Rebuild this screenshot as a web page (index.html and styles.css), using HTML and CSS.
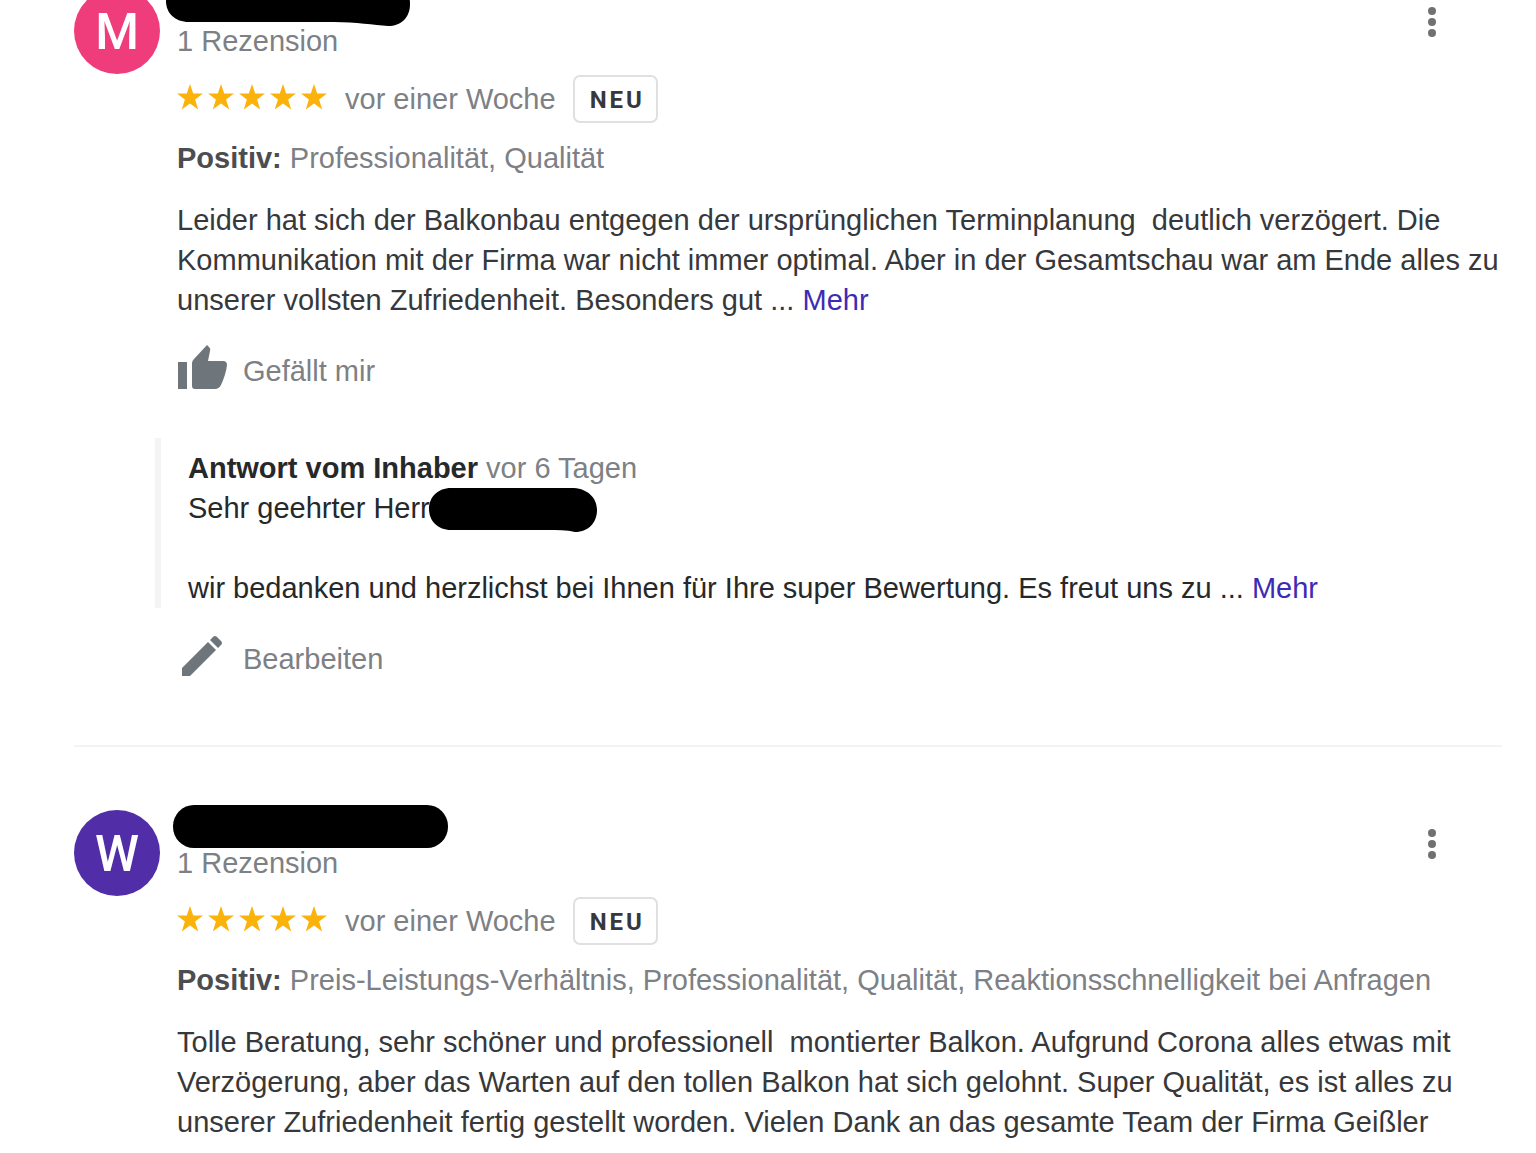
FILE: index.html
```html
<!DOCTYPE html>
<html lang="de">
<head>
  <meta charset="UTF-8">
  <meta name="viewport" content="width=device-width, initial-scale=1">
  <title>Rezensionen</title>
  <link rel="stylesheet" href="styles.css">
</head>
<body>

  <!-- shared icons -->
  <svg class="sprite" aria-hidden="true">
    <symbol id="stars" viewBox="0 0 151 31">
      <path id="star" d="M13 0l3.2 9.6H26l-7.900 5.900 3.100 10L13 19.500 4.800 25.500l3.100-10L0 9.600h9.800z"/>
      <use href="#star" x="31"/>
      <use href="#star" x="62"/>
      <use href="#star" x="93"/>
      <use href="#star" x="124"/>
    </symbol>
    <symbol id="dots" viewBox="0 0 24 32">
      <circle cx="12" cy="5" r="4"/>
      <circle cx="12" cy="16" r="4"/>
      <circle cx="12" cy="27" r="4"/>
    </symbol>
  </svg>

  <main class="reviews">
    <article class="review">
      <div class="avatar pink">M</div>
      <div class="content">
        <header class="review-header">
          <div>
            <div class="name">
              <svg class="redacted redacted-first" viewBox="0 0 244 46" aria-hidden="true">
                <path d="M21 0H223C236 0 244 9 244 24C244 38 235 46 222 46C208 45 190 42 168 42H23C9 42 0 33 0 21C0 9 9 0 21 0z"/>
              </svg>
            </div>
            <div class="muted">1 Rezension</div>
          </div>
          <button class="menu" type="button" aria-label="Menü"><svg width="24" height="32"><use href="#dots"/></svg></button>
        </header>
        <div class="rating">
          <svg class="stars" role="img" aria-label="5 von 5"><use href="#stars"/></svg>
          <span>vor einer Woche</span>
          <span class="badge">NEU</span>
        </div>
        <p class="positive"><b>Positiv:</b> Professionalität, Qualität</p>
        <p class="text">Leider hat sich der Balkonbau entgegen der ursprünglichen Terminplanung&nbsp; deutlich verzögert. Die Kommunikation mit der Firma war nicht immer optimal. Aber in der Gesamtschau war am Ende alles zu unserer vollsten Zufriedenheit. Besonders gut ... <a href="#">Mehr</a></p>
        <button class="action" type="button">
          <svg width="50" height="52" viewBox="0 0 50 52"><path d="M1 17h9v27H1zM15 41V18q0-2 2-4L30 0l2 2q2 2 1 4l-2 10h15q4 0 4 4-1 9-6 20-2 4-6 4H18q-3 0-3-3z"/></svg>
          Gefällt mir
        </button>

        <section class="reply">
          <div><b>Antwort vom Inhaber</b> <span class="muted">vor 6 Tagen</span></div>
          <div class="greeting">Sehr geehrter Herr
            <svg class="redacted redacted-reply" viewBox="0 0 168 44" aria-hidden="true">
              <path d="M22 0H145C159 1 168 10 168 22C168 34 160 44 146 44C138 42 128 42 118 42H22C9 42 0 33 0 21C0 9 9 0 22 0z"/>
            </svg>
          </div>
          <p>wir bedanken und herzlichst bei Ihnen für Ihre super Bewertung. Es freut uns zu ... <a href="#">Mehr</a></p>
        </section>
        <button class="action" type="button">
          <svg width="50" height="52" viewBox="0 0 50 52"><path d="M5 35L31 9l8 8L13 43H5zM33 7l3-3q2-2 4 0l4 4q2 2 0 4l-3 3z"/></svg>
          Bearbeiten
        </button>
      </div>
    </article>

    <article class="review">
      <div class="avatar purple">W</div>
      <div class="content">
        <header class="review-header">
          <div>
            <div class="name">
              <svg class="redacted redacted-second" viewBox="0 0 275 43" aria-hidden="true">
                <rect width="275" height="43" rx="21"/>
              </svg>
            </div>
            <div class="muted">1 Rezension</div>
          </div>
          <button class="menu" type="button" aria-label="Menü"><svg width="24" height="32"><use href="#dots"/></svg></button>
        </header>
        <div class="rating">
          <svg class="stars" role="img" aria-label="5 von 5"><use href="#stars"/></svg>
          <span>vor einer Woche</span>
          <span class="badge">NEU</span>
        </div>
        <p class="positive"><b>Positiv:</b> Preis-Leistungs-Verhältnis, Professionalität, Qualität, Reaktionsschnelligkeit bei Anfragen</p>
        <p class="text">Tolle Beratung, sehr schöner und professionell&nbsp; montierter Balkon. Aufgrund Corona alles etwas mit Verzögerung, aber das Warten auf den tollen Balkon hat sich gelohnt. Super Qualität, es ist alles zu unserer Zufriedenheit fertig gestellt worden. Vielen Dank an das gesamte Team der Firma Geißler</p>
      </div>
    </article>
  </main>

</body>
</html>
```
FILE: styles.css
```css
body {
  margin: 0;
  background: #fff;
  color: #36383b;
  font-family: "Liberation Sans", Arial, sans-serif;
  font-size: 29px;
  line-height: 40px;
}

p {
  margin: 0;
}

a {
  color: #3d2bb5;
  text-decoration: none;
}

button {
  padding: 0;
  border: 0;
  background: none;
  font: inherit;
  cursor: pointer;
}

.sprite {
  display: block;
  width: 0;
  height: 0;
}

/* the list is scrolled a little, its first name is cut off */
.reviews {
  margin: -76px 34px 0 74px;
}

.review {
  display: grid;
  grid-template-columns: 86px 1fr;
  column-gap: 17px;
  padding-top: 57px;
}

.review + .review {
  border-top: 2px solid #f3f3f3;
  padding-top: 56px;
}

.avatar {
  width: 86px;
  height: 86px;
  margin-top: 7px;
  border-radius: 50%;
  color: #fff;
  font-family: Roboto, sans-serif;
  font-size: 50px;
  font-weight: 500;
  line-height: 88px;
  text-align: center;
}

.pink {
  background: #ef3d7b;
}

.purple {
  background: #512da8;
}

.review-header {
  display: flex;
  align-items: center;
  justify-content: space-between;
}

.name {
  position: relative;
  height: 40px;
}

.redacted {
  position: absolute;
  fill: #000;
}

.redacted-first {
  left: -11px;
  top: -1px;
  width: 244px;
  height: 46px;
}

.redacted-second {
  left: -4px;
  top: 2px;
  width: 275px;
  height: 43px;
}

.redacted-reply {
  left: 241px;
  top: 0;
  width: 168px;
  height: 44px;
}

.muted {
  color: #7d8084;
}

.menu {
  margin: 2px 58px 0 0;
  line-height: 0;
  fill: #707173;
}

.rating {
  display: flex;
  align-items: center;
  gap: 17px;
  margin-top: 14px;
  color: #7d8084;
}

.stars {
  width: 151px;
  height: 31px;
  fill: #fbb20b;
}

.badge {
  box-sizing: border-box;
  height: 48px;
  padding: 3px 11px 0 15px;
  border: 2px solid #dfe0e2;
  border-radius: 7px;
  color: #36383b;
  font-family: Roboto, sans-serif;
  font-size: 24px;
  font-weight: 700;
  letter-spacing: 3px;
}

.positive {
  margin-top: 15px;
  color: #7d8084;
}

.positive b {
  color: #4b4d50;
}

.text {
  margin-top: 22px;
}

.action {
  display: flex;
  align-items: center;
  gap: 16px;
  height: 52px;
  margin-top: 25px;
  color: #7d8084;
}

.action svg {
  fill: #6f767b;
}

.reply {
  margin: 41px 0 0 -22px;
  padding: 10px 0 0 27px;
  border-left: 6px solid #f4f4f4;
  color: #27282a;
}

.greeting {
  position: relative;
  margin-bottom: 40px;
}

.reply + .action {
  margin-bottom: 60px;
}
```
